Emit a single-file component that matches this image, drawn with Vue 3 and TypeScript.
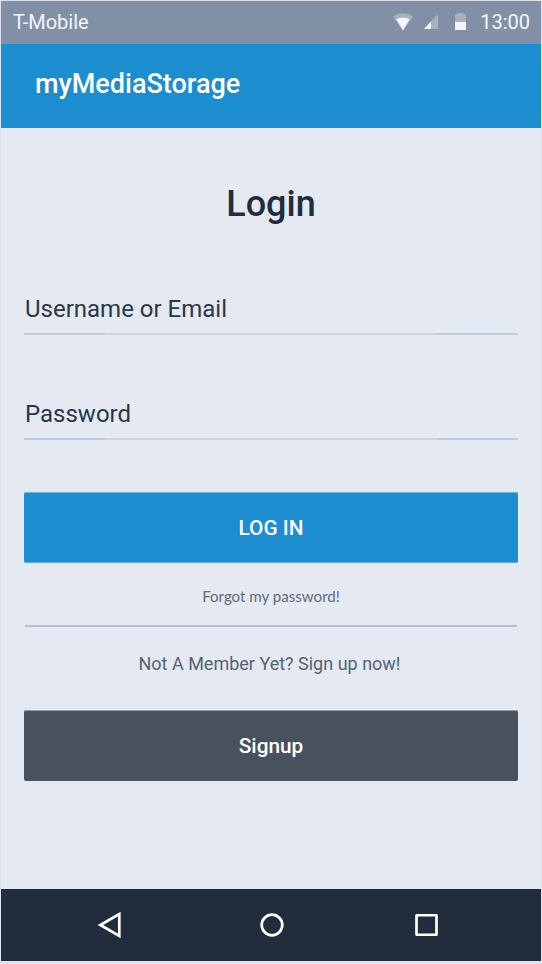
<script setup lang="ts">
import { ref } from 'vue'

interface Field {
  id: string
  label: string
  type: string
}

const fields: Field[] = [
  { id: 'username', label: 'Username or Email', type: 'text' },
  { id: 'password', label: 'Password', type: 'password' },
]

const values = ref<Record<string, string>>({ username: '', password: '' })
</script>

<template>
  <div class="phone">
    <div class="status">
      <span class="carrier">T-Mobile</span>
      <div class="indicators">
        <svg class="wifi" width="20" height="18" viewBox="0 0 20 18">
          <path d="M0 3.4Q10-3 20 3.4L10 17.5Z" fill="#fff" opacity=".3" />
          <path d="M3.3 6.2Q10 3 16.7 6.2L10 17.5Z" fill="#f2f4f6" />
        </svg>
        <svg class="signal" width="14" height="15" viewBox="0 0 14 15">
          <path d="M14 0V15H0Z" fill="#fff" opacity=".3" />
          <path d="M7 7.5V15H0Z" fill="#f2f4f6" />
        </svg>
        <svg class="battery" width="11" height="17" viewBox="0 0 11 17">
          <path d="M0 9V2L2 1L3 0H8L9 1L11 2V9Z" fill="#fff" opacity=".3" />
          <path d="M0 9H11V17H0Z" fill="#f2f4f6" />
        </svg>
        <span class="clock">13:00</span>
      </div>
    </div>
    <header class="appbar">myMediaStorage</header>
    <main class="content">
      <h1 class="title">Login</h1>
      <form class="form" @submit.prevent>
        <div v-for="field in fields" :key="field.id" class="field">
          <input
            :id="field.id"
            v-model="values[field.id]"
            class="input"
            :type="field.type"
            :placeholder="field.label"
          />
        </div>
        <button class="button primary" type="submit">LOG IN</button>
      </form>
      <a class="forgot">Forgot my password!</a>
      <p class="invite">Not A Member Yet? Sign up now!</p>
      <button class="button secondary" type="button">Signup</button>
    </main>
    <nav class="navbar">
      <svg class="back" width="24" height="28" viewBox="0 0 24 28">
        <path d="M21.3 3V25L2.4 14Z" />
      </svg>
      <svg class="home" width="24" height="24" viewBox="0 0 24 24">
        <circle cx="12" cy="12" r="10.3" />
      </svg>
      <svg class="recent" width="23" height="22" viewBox="0 0 23 22">
        <rect x="1.5" y="1.25" width="20" height="19.5" rx=".5" />
      </svg>
    </nav>
  </div>
</template>

<style>
body {
  background: #dce3ec;
}
</style>

<style scoped>
.phone {
  box-sizing: border-box;
  width: 542px;
  height: 964px;
  padding: 1px 1px 3px;
  display: flex;
  flex-direction: column;
  background: #dce3ec;
  font-family: Roboto, sans-serif;
}
.status {
  height: 43px;
  display: flex;
  align-items: center;
  justify-content: space-between;
  padding: 0 11px 2px 12px;
  background: #8290a6;
  color: #f4f6f9;
  font-size: 20px;
  box-sizing: border-box;
}
.indicators {
  display: flex;
  align-items: center;
}
.wifi {
  margin-right: 11px;
}
.signal {
  margin-right: 17px;
}
.battery {
  margin-right: 14px;
}
.appbar {
  box-sizing: border-box;
  height: 84px;
  padding: 0 0 4px 34px;
  line-height: 80px;
  background: #1c8dce;
  color: #fff;
  font-size: 27px;
  font-weight: 500;
}
.content {
  height: 761px;
  box-sizing: border-box;
  padding: 56px 23px 0;
  background: #e4e9f2;
  color: #212d3d;
}
.title {
  margin: 0;
  line-height: 40px;
  font-size: 36px;
  font-weight: 500;
  text-align: center;
}
.form {
  padding-top: 62px;
}
.field {
  height: 49px;
  margin-bottom: 56px;
  box-sizing: border-box;
  border-bottom: 2px solid;
  border-image: linear-gradient(90deg, #c0ccdb 82px, #cbd3df 82px, #cbd3df 412px, #c0ccdb 412px) 1;
}
.input {
  display: block;
  width: 100%;
  height: 47px;
  box-sizing: border-box;
  padding: 0 1px 2px;
  border: 0;
  outline: 0;
  background: transparent;
  color: #212d3d;
  font: 24px Roboto, sans-serif;
}
.input::placeholder {
  color: #2a3747;
  opacity: 1;
}
.button {
  display: block;
  width: 100%;
  height: 71px;
  padding: 0;
  border: 0;
  border-radius: 2px;
  color: #fff;
  font: 500 20.8px Roboto, sans-serif;
}
.primary {
  margin-top: -4px;
  background: #1c8dce;
  box-shadow: inset 0 1px #76b3da, inset 0 -1px #5caadb;
}
.secondary {
  background: #48525c;
  box-shadow: inset 0 1px #949da8;
}
.forgot {
  display: block;
  height: 62px;
  margin: 0 1px;
  border-bottom: 2px solid #b5bfcd;
  text-align: center;
  color: #626c78;
  font: 15.1px/67px Lato, sans-serif;
}
.invite {
  height: 83px;
  margin: 0 0 0 -3px;
  line-height: 74px;
  text-align: center;
  color: #566270;
  font-size: 18px;
}
.navbar {
  height: 72px;
  display: flex;
  align-items: center;
  background: #212d3d;
}
.navbar svg {
  fill: none;
  stroke: #fff;
  stroke-width: 2.7;
}
.back {
  margin-left: 97px;
}
.home {
  margin-left: 138px;
}
.recent {
  margin-left: 131px;
}
</style>
